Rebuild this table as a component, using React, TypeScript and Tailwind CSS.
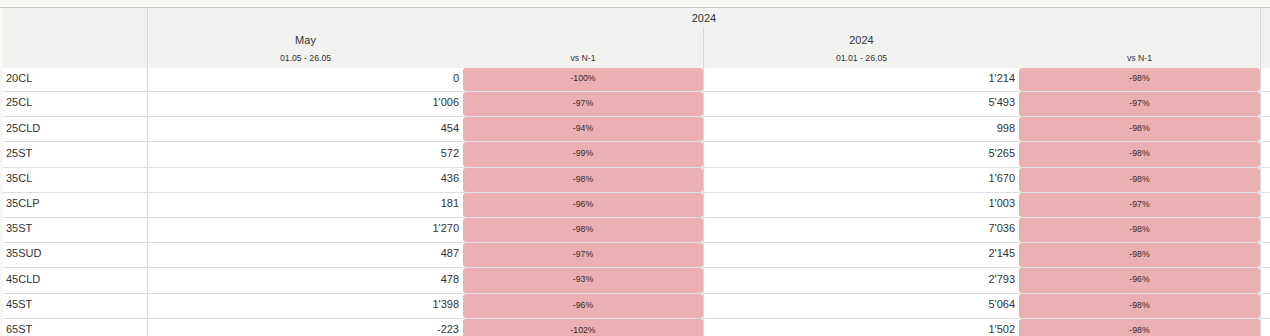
const rows = [
  { label: '20CL', may: '0', mayPct: '-100%', ytd: '1\'214', ytdPct: '-98%' },
  { label: '25CL', may: '1\'006', mayPct: '-97%', ytd: '5\'493', ytdPct: '-97%' },
  { label: '25CLD', may: '454', mayPct: '-94%', ytd: '998', ytdPct: '-98%' },
  { label: '25ST', may: '572', mayPct: '-99%', ytd: '5\'265', ytdPct: '-98%' },
  { label: '35CL', may: '436', mayPct: '-98%', ytd: '1\'670', ytdPct: '-98%' },
  { label: '35CLP', may: '181', mayPct: '-96%', ytd: '1\'003', ytdPct: '-97%' },
  { label: '35ST', may: '1\'270', mayPct: '-98%', ytd: '7\'036', ytdPct: '-98%' },
  { label: '35SUD', may: '487', mayPct: '-97%', ytd: '2\'145', ytdPct: '-98%' },
  { label: '45CLD', may: '478', mayPct: '-93%', ytd: '2\'793', ytdPct: '-96%' },
  { label: '45ST', may: '1\'398', mayPct: '-96%', ytd: '5\'064', ytdPct: '-98%' },
  { label: '65ST', may: '-223', mayPct: '-102%', ytd: '1\'502', ytdPct: '-98%' },
]

function GroupHeader({ title, range, border }: { title: string; range: string; border?: boolean }) {
  return (
    <div className={'flex w-[556px] ' + (border ? 'border-r border-[#d5d9de]' : '')}>
      <div className="w-[315px] flex flex-col items-center">
        <div className="h-[24px] flex items-center text-[11px]">{title}</div>
        <div className="h-[14px] flex items-center text-[8.7px]">{range}</div>
      </div>
      <div className="flex-1 flex flex-col items-center">
        <div className="h-[24px]" />
        <div className="h-[14px] flex items-center text-[8.7px]">vs N-1</div>
      </div>
    </div>
  )
}

function PctCell({ value }: { value: string }) {
  return (
    <div className="flex-1 h-full flex items-center justify-center pb-[1px] bg-[#ebb0b1] rounded-[3px] text-[8.7px] text-[#3a2a2a]">
      {value}
    </div>
  )
}

export default function App() {
  return (
    <div className="w-[1270px] h-[336px] overflow-hidden bg-[#f8f7f4] text-[#333] font-['Liberation_Sans',Arial,sans-serif]">
      <div className="h-[8px] border-b border-[#c9c9c9]" />
      <div className="pl-[3px]">
        {/* header */}
        <div className="flex h-[60px] bg-[#f2f2f1]">
          <div className="w-[145px] border-r border-[#d5d9de]" />
          <div className="w-[1112px] flex flex-col">
            <div className="h-[20px] flex items-center justify-center text-[11px]">2024</div>
            <div className="flex flex-1">
              <GroupHeader title="May" range="01.05 - 26.05" border />
              <GroupHeader title="2024" range="01.01 - 26.05" />
            </div>
          </div>
          <div className="flex-1 border-l border-[#d5d9de]" />
        </div>

        {/* body */}
        {rows.map((r, i) => (
          <div
            key={r.label}
            className={'flex bg-white border-b border-[#dcdfe3] text-[11px] ' + (i === 0 ? 'h-[24px]' : 'h-[25.2px]')}
          >
            <div className="w-[145px] border-r border-[#d5d9de] flex items-center pl-[3px] pb-[3px]">{r.label}</div>
            <div className="w-[556px] flex border-r border-[#d5d9de]">
              <div className="w-[315px] flex items-center justify-end pr-[4px] pb-[3px]">{r.may}</div>
              <PctCell value={r.mayPct} />
            </div>
            <div className="w-[556px] flex">
              <div className="w-[315px] flex items-center justify-end pr-[4px] pb-[3px]">{r.ytd}</div>
              <PctCell value={r.ytdPct} />
            </div>
            <div className="flex-1 border-l border-[#d5d9de]" />
          </div>
        ))}
      </div>
    </div>
  )
}
